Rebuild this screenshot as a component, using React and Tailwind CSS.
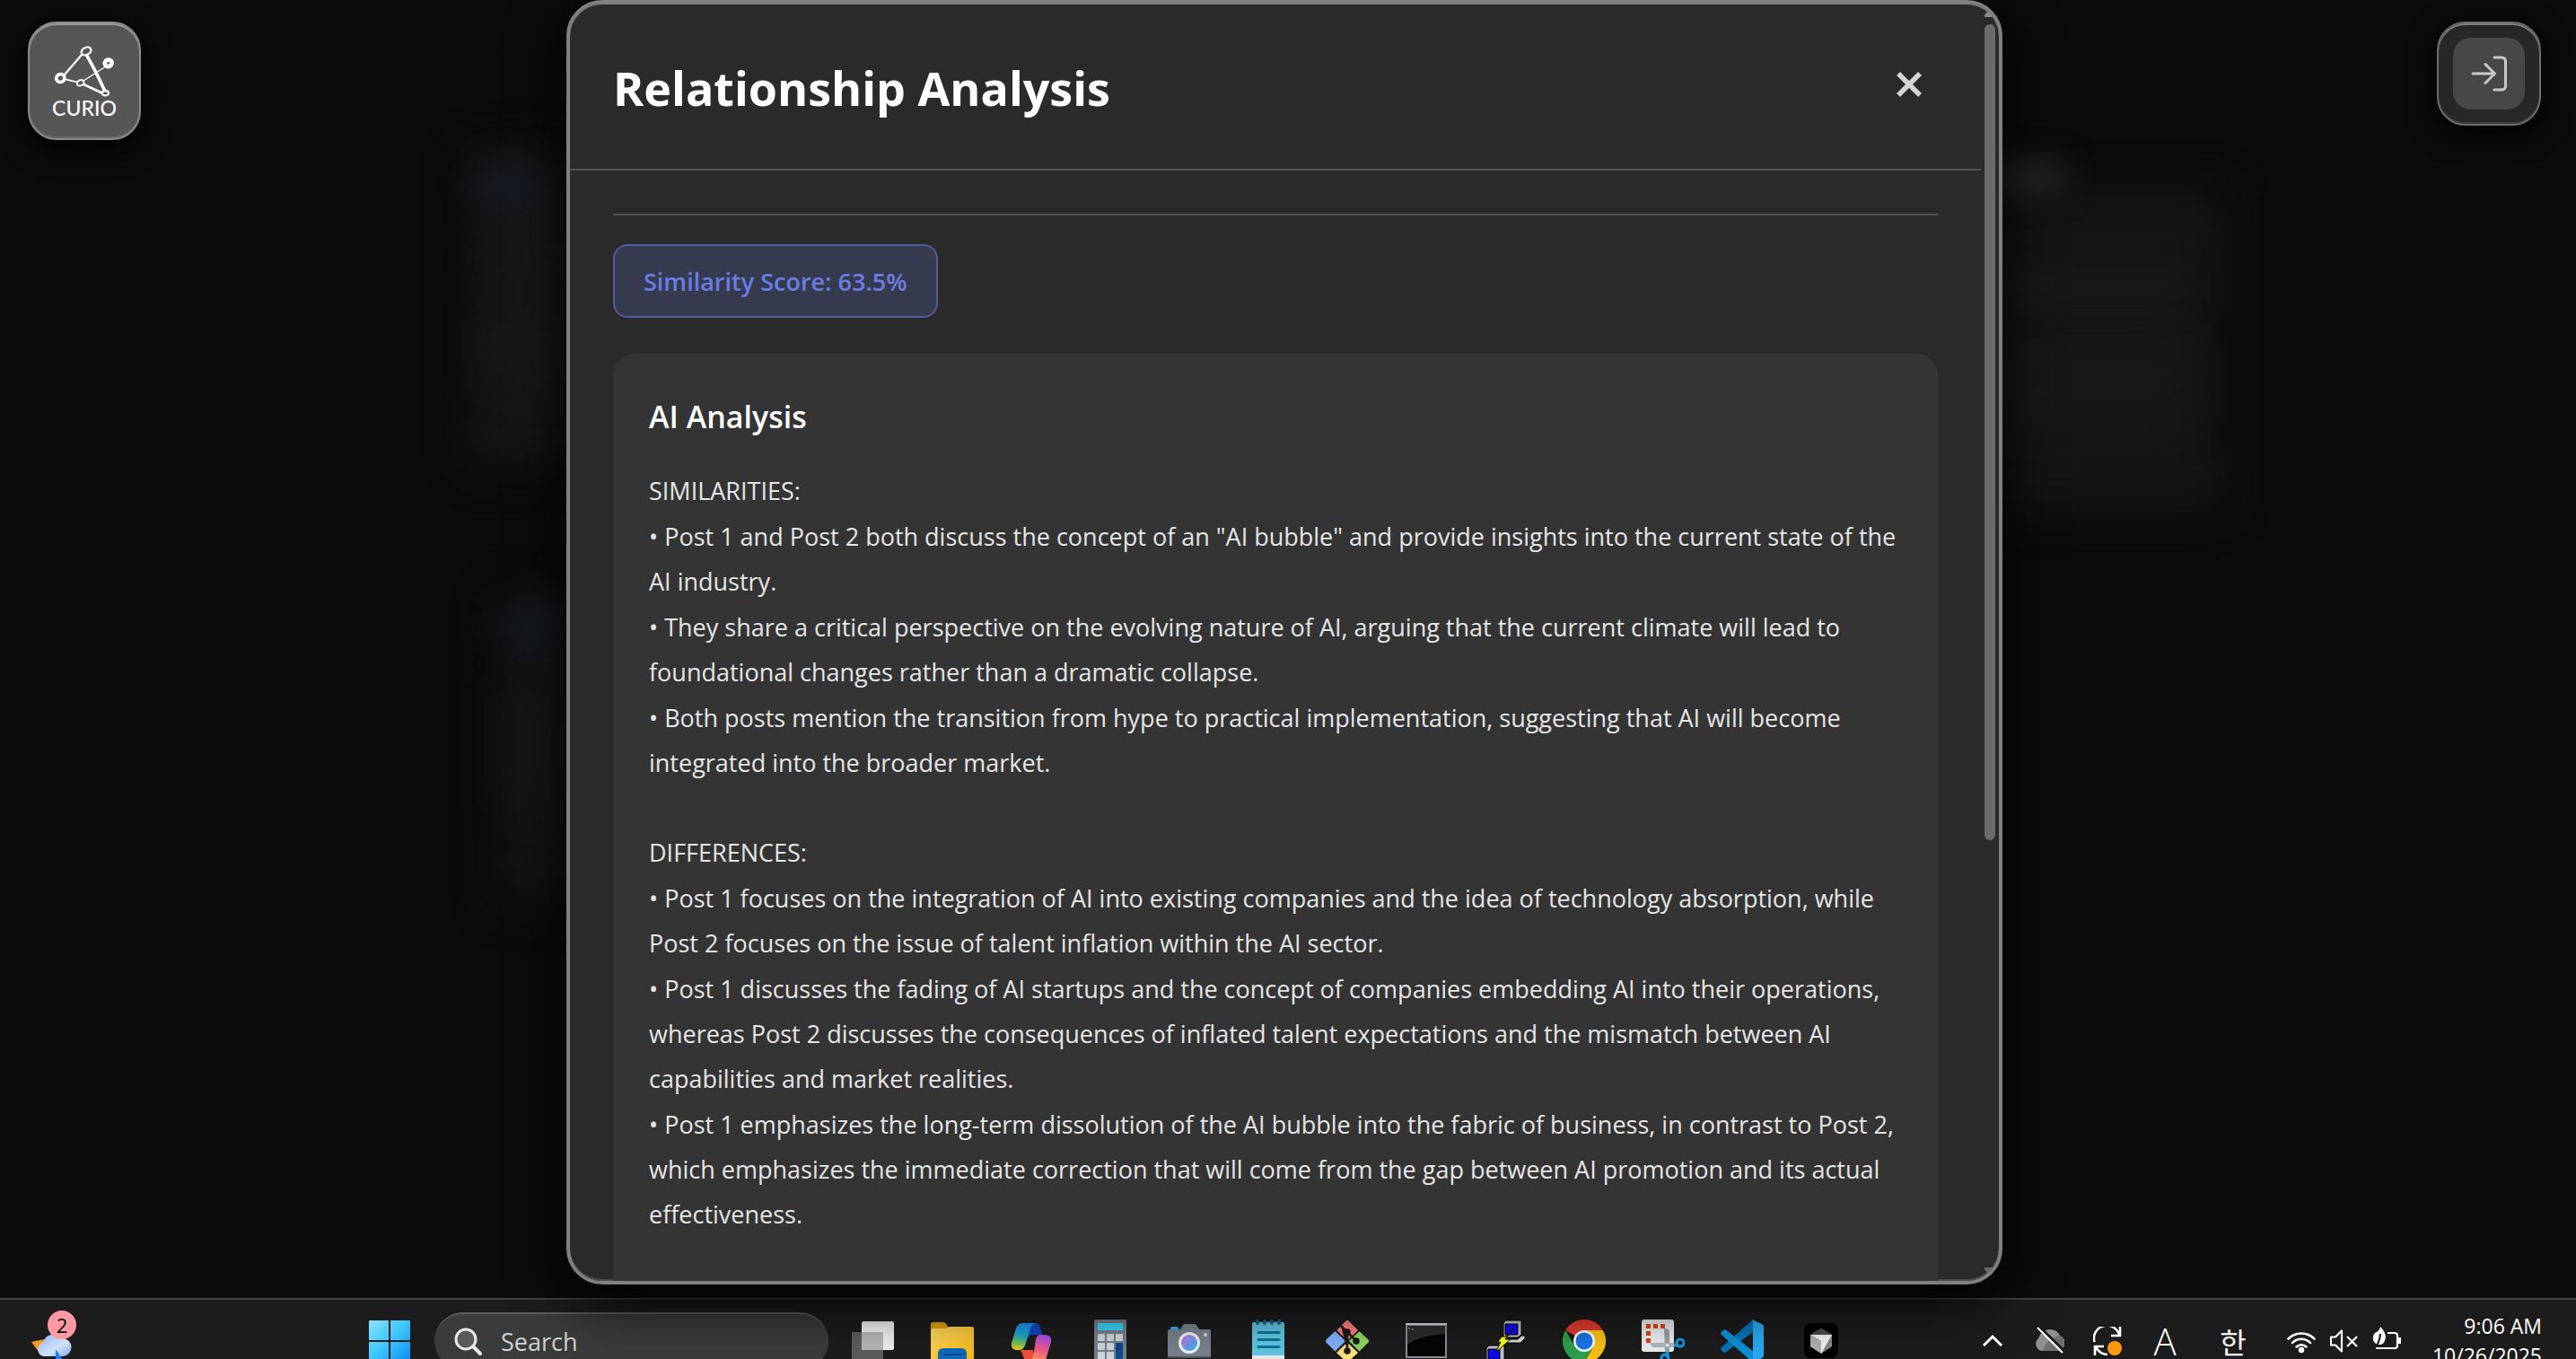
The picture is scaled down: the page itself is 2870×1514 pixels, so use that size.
import React from 'react';

const similarities = [
  'Post 1 and Post 2 both discuss the concept of an "AI bubble" and provide insights into the current state of the AI industry.',
  'They share a critical perspective on the evolving nature of AI, arguing that the current climate will lead to foundational changes rather than a dramatic collapse.',
  'Both posts mention the transition from hype to practical implementation, suggesting that AI will become integrated into the broader market.',
];

const differences = [
  'Post 1 focuses on the integration of AI into existing companies and the idea of technology absorption, while Post 2 focuses on the issue of talent inflation within the AI sector.',
  'Post 1 discusses the fading of AI startups and the concept of companies embedding AI into their operations, whereas Post 2 discusses the consequences of inflated talent expectations and the mismatch between AI capabilities and market realities.',
  'Post 1 emphasizes the long-term dissolution of the AI bubble into the fabric of business, in contrast to Post 2, which emphasizes the immediate correction that will come from the gap between AI promotion and its actual effectiveness.',
];

function CurioMark() {
  return (
    <svg viewBox="96 105 210 180" className="w-[70px] h-[60px]" fill="none" stroke="#fff" strokeLinecap="round">
      <path d="M136 203 192 138" strokeWidth="7" />
      <path d="M210 142 Q238 190 268 256" strokeWidth="11" />
      <path d="M138 220 176 229" strokeWidth="5" />
      <path d="M200 238 258 265" strokeWidth="8" />
      <path d="M198 225 268 180" strokeWidth="4" />
      <ellipse cx="207" cy="126" rx="17" ry="12" strokeWidth="7" transform="rotate(-28 207 126)" />
      <ellipse cx="281" cy="166" rx="12" ry="11" strokeWidth="14" transform="rotate(-28 281 166)" />
      <ellipse cx="121" cy="216" rx="14" ry="13" strokeWidth="11" transform="rotate(-28 121 216)" />
      <ellipse cx="188" cy="232" rx="12" ry="9" strokeWidth="6" transform="rotate(-28 188 232)" />
      <ellipse cx="271" cy="266" rx="11" ry="8" strokeWidth="7" />
    </svg>
  );
}

function LoginIcon() {
  return (
    <svg viewBox="0 0 40 40" className="w-10 h-10" fill="none" stroke="#c8c8c8" strokeWidth="3" strokeLinecap="round" strokeLinejoin="round">
      <path d="M2 20H26M16 9.5 26.5 20 16 30.5" />
      <path d="M26 2H34Q38.500 2 38.500 6.500V33.500Q38.500 38 34 38H26" />
    </svg>
  );
}

function BlurredBoard() {
  return (
    <div className="absolute inset-0 overflow-hidden" aria-hidden="true">
      <div className="absolute left-[524px] top-[170px] w-[420px] h-[345px] bg-[#151515] blur-xl" />
      <div className="absolute left-[545px] top-[190px] w-[50px] h-[36px] bg-[#1b2230] blur-xl" />
      <div className="absolute left-[550px] top-[272px] w-[140px] h-[36px] bg-[#1a1a1a] blur-xl" />
      <div className="absolute left-[550px] top-[340px] w-[140px] h-[80px] bg-[#181818] blur-xl" />
      <div className="absolute left-[558px] top-[665px] w-[420px] h-[340px] bg-[#141414] blur-xl" />
      <div className="absolute left-[575px] top-[680px] w-[50px] h-[36px] bg-[#1a2230] blur-xl" />
      <div className="absolute left-[575px] top-[760px] w-[140px] h-[140px] bg-[#161616] blur-xl" />
      <div className="absolute left-[2050px] top-[212px] w-[424px] h-[355px] bg-[#141414] blur-xl" />
      <div className="absolute left-[2190px] top-[180px] w-[108px] h-[36px] bg-[#272727] blur-lg" />
      <div className="absolute left-[2190px] top-[310px] w-[240px] h-[28px] bg-[#1a1a1a] blur-lg" />
      <div className="absolute left-[2190px] top-[385px] w-[245px] h-[80px] bg-[#181818] blur-xl" />
    </div>
  );
}

function Scrollbar() {
  return (
    <div className="w-5 shrink-0 flex flex-col items-center justify-between py-[5px]" aria-hidden="true">
      <svg viewBox="0 0 12 10" className="w-3 h-[10px]" fill="#8a8a8a"><path d="M0 10V8L6 0 12 8V10Z" /></svg>
      <div className="flex-1 w-3 py-2">
        <div className="h-[66%] rounded-full bg-[#6b6b6b]" />
      </div>
      <svg viewBox="0 0 12 10" className="w-3 h-[10px]" fill="#6b6b6b"><path d="M0 0V2L6 10 12 2V0Z" /></svg>
    </div>
  );
}

function AnalysisList({ title, items }) {
  return (
    <section className="flex flex-col gap-px">
      <h4>{title}</h4>
      {items.map((item) => (
        <p key={item}>{`• ${item}`}</p>
      ))}
    </section>
  );
}

function AnalysisDialog() {
  return (
    <div
      role="dialog"
      aria-labelledby="dialog-title"
      className="relative flex w-[1600px] max-w-full h-full rounded-[40px] border-4 border-[#808080] bg-[#2a2a2a] overflow-hidden shadow-[inset_0_1px_0_#808080,inset_0_-2px_0_#4a4a4a,0_16px_64px_#000]"
    >
      <div className="flex-1 min-w-0 overflow-y-auto [scrollbar-width:none]">
        <header className="flex items-center justify-between h-[186px] px-12 pb-1 border-b-2 border-[#535353]">
          <h2 id="dialog-title" className="pt-2 text-[52px] leading-[72px] font-bold text-white">Relationship Analysis</h2>
          <button type="button" aria-label="Close" className="w-16 h-16 flex items-center justify-center">
            <svg viewBox="0 0 28 28" className="w-7 h-7" stroke="#d4d4d4" strokeWidth="5.500" fill="none"><path d="M2 2 26 26M26 2 2 26" /></svg>
          </button>
        </header>
        <div className="px-12 pt-12">
          <div className="border-t-2 border-[#535353] pt-8">
            <div className="inline-flex items-center h-[82px] px-8 pt-0.5 rounded-2xl border-2 border-[#505c9c] bg-[#363a4e] text-[27px] font-semibold text-[#6b7de3]">
              Similarity Score: 63.5%
            </div>
          </div>
          <div className="mt-10 rounded-3xl bg-[#343434] px-10 pt-[46px] pb-24">
            <h3 className="text-[34px] leading-[48px] font-semibold text-white">AI Analysis</h3>
            <div className="mt-[34px] flex flex-col gap-[50px] text-[27px] leading-[50px] text-[#e6e6e6]">
              <AnalysisList title="SIMILARITIES:" items={similarities} />
              <AnalysisList title="DIFFERENCES:" items={differences} />
            </div>
          </div>
        </div>
      </div>
      <Scrollbar />
    </div>
  );
}

function WeatherIcon() {
  return (
    <svg viewBox="0 0 48 40" className="w-12 h-10">
      <defs>
        <linearGradient id="cloud" x1="0" y1="0" x2="1" y2="1">
          <stop offset="0" stopColor="#8fb4f2" />
          <stop offset="0.6" stopColor="#d3e2fa" />
          <stop offset="1" stopColor="#7fa6ee" />
        </linearGradient>
      </defs>
      <path d="M0 17Q12 14 38 11L28 30 8 28Z" fill="#f59a1c" />
      <path d="M14 33a8 8 0 0 1-1-15.500A12 12 0 0 1 34 13a10 10 0 0 1 1 20Z" fill="url(#cloud)" />
      <path d="M27 25 35 37Q36 40 31 40 27 40 27 36Z" fill="#1f7cf2" />
    </svg>
  );
}

function WindowsIcon() {
  return (
    <svg viewBox="0 0 48 48" className="w-12 h-12">
      <defs>
        <linearGradient id="win" x1="0" y1="0" x2="1" y2="1">
          <stop offset="0" stopColor="#8ce0ff" />
          <stop offset="0.5" stopColor="#3cc6fb" />
          <stop offset="1" stopColor="#0a8bf5" />
        </linearGradient>
      </defs>
      <path fill="url(#win)" d="M2 1H23V23H1V2Q1 1 2 1ZM25 1H46Q47 1 47 2V23H25ZM1 25H23V47H2Q1 47 1 46ZM25 25H47V46Q47 47 46 47H25Z" />
    </svg>
  );
}

function TaskViewIcon() {
  return (
    <svg viewBox="0 0 48 48" className="w-12 h-12">
      <rect x="11" y="2" width="36" height="32" rx="2" fill="#f1f1f1" />
      <rect x="-1" y="14" width="36" height="32" rx="2" fill="#5c5c5c" />
      <path d="M11 14H35V34H11Z" fill="#b7b7b7" />
    </svg>
  );
}

function FolderIcon() {
  return (
    <svg viewBox="0 0 48 48" className="w-12 h-12">
      <defs>
        <linearGradient id="folder" x1="0" y1="0" x2="1" y2="1">
          <stop offset="0" stopColor="#ffdc66" />
          <stop offset="1" stopColor="#f8b50a" />
        </linearGradient>
      </defs>
      <path d="M0 5Q0 3 2 3H14Q16 3 17 5L20 9V16H0Z" fill="#e2a104" />
      <path d="M0 12Q0 10 2 10H17L21 8H46Q48 8 48 10V48H0Z" fill="url(#folder)" />
      <path d="M8 48V38Q8 32 14 32H34Q40 32 40 38V48Z" fill="#0d68bd" />
      <path d="M14 39H34" stroke="#064a8e" strokeWidth="2" />
    </svg>
  );
}

function CopilotIcon() {
  return (
    <svg viewBox="0 0 48 48" className="w-12 h-12">
      <defs>
        <linearGradient id="cpA" x1="0.500" y1="0" x2="0.300" y2="1">
          <stop offset="0" stopColor="#1b8df0" />
          <stop offset="0.450" stopColor="#22a6c8" />
          <stop offset="0.750" stopColor="#6cbf54" />
          <stop offset="1" stopColor="#f3d116" />
        </linearGradient>
        <linearGradient id="cpB" x1="0.700" y1="0" x2="0.400" y2="1">
          <stop offset="0" stopColor="#a04df0" />
          <stop offset="0.500" stopColor="#f0588c" />
          <stop offset="1" stopColor="#ff9d52" />
        </linearGradient>
      </defs>
      <path d="M22 4H29Q33 4 34 9L36 17H27Q22 17 20 22Z" fill="#1344c4" />
      <path d="M14 4H29Q24 5 22 13L17 29Q15 34 10 34H8Q1 34 2 26L7 10Q9 4 14 4Z" fill="url(#cpA)" />
      <path d="M12 34H26L28 45Q22 49 18 46Q15 43 14 38Z" fill="#f0503a" />
      <path d="M34 17H39Q47 17 46 25L41 42Q39 48 33 48H20Q25 46 27 36L29 22Q30 17 34 17Z" fill="url(#cpB)" />
    </svg>
  );
}

function CalculatorIcon() {
  return (
    <svg viewBox="0 0 48 48" className="w-12 h-12">
      <rect x="6" width="36" height="48" rx="2" fill="#76808a" />
      <rect x="10" y="4" width="28" height="8" rx="1" fill="#3bd2fb" />
      <g fill="#cfd6dd">
        <rect x="10" y="16" width="8" height="8" rx="1" />
        <rect x="20" y="16" width="8" height="8" rx="1" />
        <rect x="30" y="16" width="8" height="8" rx="1" />
        <rect x="10" y="26" width="8" height="8" rx="1" />
        <rect x="20" y="26" width="8" height="8" rx="1" />
        <rect x="10" y="36" width="8" height="8" rx="1" />
        <rect x="20" y="36" width="8" height="8" rx="1" />
      </g>
      <rect x="30" y="26" width="8" height="18" rx="1" fill="#0f4a8e" />
    </svg>
  );
}

function CameraIcon() {
  return (
    <svg viewBox="0 0 48 48" className="w-12 h-12">
      <defs>
        <linearGradient id="lens" x1="0" y1="0" x2="1" y2="1">
          <stop offset="0.200" stopColor="#b47be8" />
          <stop offset="0.850" stopColor="#35b0f0" />
        </linearGradient>
      </defs>
      <path d="M3 10Q3 8 5 8H10Q12 8 12 10V14H3Z" fill="#31aef0" />
      <path d="M0 13Q0 11 2 11H14L17 6Q18 5 19 5H29Q31 5 32 6L35 11H46Q48 11 48 13V41Q48 43 46 43H2Q0 43 0 41Z" fill="#78828c" />
      <path d="M0 41H48Q48 43 46 43H2Q0 43 0 41Z" fill="#4c555e" />
      <circle cx="24" cy="26" r="12" fill="#f2f2f2" />
      <circle cx="24" cy="26" r="9" fill="url(#lens)" />
      <circle cx="42" cy="17" r="2" fill="#cfd6dd" />
    </svg>
  );
}

function NotepadIcon() {
  return (
    <svg viewBox="0 0 48 48" className="w-12 h-12">
      <path d="M6 38H42V48H6Z" fill="#e8eaec" />
      <path d="M6 5Q6 3 8 3H40Q42 3 42 5V40H6Z" fill="#62c6e2" />
      <path d="M12 2V4M20 2V4M28 2V4M36 2V4" stroke="#0b6b8c" strokeWidth="4" strokeLinecap="round" />
      <path d="M13 14.500H36M13 22.500H36M13 30.500H36" stroke="#0b7699" strokeWidth="3" strokeLinecap="round" />
    </svg>
  );
}

function GitIcon() {
  return (
    <svg viewBox="0 0 48 48" className="w-12 h-12">
      <path d="M22.500 1.500Q24 0 25.500 1.500L36 12 24 23.500 12.500 12Z" fill="#ff8080" />
      <path d="M37.500 13 47.500 22.500Q48.500 24 47.500 25.500L37.500 35.500 26 24Z" fill="#8fd660" />
      <path d="M10.500 13 22 24 10.500 35.500 .5 25.500Q-.5 24 .5 22.500Z" fill="#82b0ff" />
      <path d="M24 25.500 36 37 25.500 46.500Q24 48 22.500 46.500L12 37Z" fill="#ffe27d" />
      <g stroke="#1c1c1c" strokeWidth="2.500" fill="#1c1c1c">
        <path d="M17 7 24 14V35M24 14 34 24" />
        <circle cx="24" cy="14" r="2.500" />
        <circle cx="24" cy="35" r="2.500" />
        <circle cx="34" cy="24" r="2.500" />
      </g>
    </svg>
  );
}

function TerminalIcon() {
  return (
    <svg viewBox="0 0 48 48" className="w-12 h-12">
      <rect x="1" y="4" width="46" height="39" fill="#8c9099" />
      <path d="M1 4H47V6H1Z" fill="#d9dbe2" />
      <rect x="3" y="7" width="42" height="34" fill="#050505" />
      <path d="M3 7H45V16Q16 18 3 28Z" fill="#2b2b2b" />
      <path d="M4 9 6 11M8 11H10" stroke="#bbb" />
    </svg>
  );
}

function PuttyIcon() {
  return (
    <svg viewBox="0 0 48 48" className="w-12 h-12" stroke="#000">
      <path d="M22 4 25 1H42L42 17 38 20H22Z" fill="#c4c4c4" />
      <path d="M24 5H38V17H24Z" fill="#0a0af0" />
      <path d="M28 22H38L42 18H46V21L41 26H24Z" fill="#d8d8d8" />
      <path d="M3 32 6 29H23V44L19 47H3Z" fill="#c4c4c4" />
      <path d="M5 33H18V44H5Z" fill="#0a0af0" />
      <path d="M0 48 3 46H22L28 44V48Z" fill="#d8d8d8" />
      <path d="M34 9 24 22H30L13 37 19 25 15 26 20 19H25Z" fill="#fdfd10" strokeWidth="1" />
    </svg>
  );
}

function ChromeIcon() {
  return (
    <svg viewBox="0 0 48 48" className="w-12 h-12">
      <path d="M24 24 3.200 12A24 24 0 0 1 44.800 12Z" fill="#e33b2e" />
      <path d="M24 12H44.800A24 24 0 0 1 24 48L34.400 30Z" fill="#fbc116" />
      <path d="M13.600 30 3.200 12A24 24 0 0 0 24 48L34.400 30Z" fill="#2da04a" />
      <circle cx="24" cy="24" r="12" fill="#fff" />
      <circle cx="24" cy="24" r="9.500" fill="#1c74e8" />
    </svg>
  );
}

function SnippingIcon() {
  return (
    <svg viewBox="0 0 48 48" className="w-12 h-12" fill="none">
      <rect width="36" height="36" rx="3" fill="#eceef0" />
      <path d="M5 5H10V10H5ZM13 5H18V10H13ZM21 5H26V10H21ZM5 13H10V18H5ZM5 21H10V26H5Z" fill="#dd4012" />
      <path d="M25 10Q31 10 31 14V36H26Z" fill="#9aa0a7" />
      <path d="M10 26H36V31H14Q10 31 10 26Z" fill="#b3b8be" />
      <path d="M36 28.500H41M28.500 36V42" stroke="#1497dd" strokeWidth="4" />
      <circle cx="43" cy="26" r="4" stroke="#1497dd" strokeWidth="3" />
      <circle cx="26" cy="43" r="4" stroke="#1497dd" strokeWidth="3" />
      <circle cx="28.500" cy="28.500" r="1.500" fill="#fff" />
    </svg>
  );
}

function VsCodeIcon() {
  return (
    <svg viewBox="0 0 48 48" className="w-12 h-12">
      <path d="M1 31 36 0V14L5 37Q3 37 1 34.500Q-.5 33 1 31Z" fill="#0873b8" />
      <path d="M1 17Q-.5 15 1 13.500L3.500 11.500Q5 10.500 6.500 12L36 35V48Z" fill="#0c8fd8" />
      <path d="M35 0 46 5Q48 6 48 8V40Q48 42 46 43L35 48Q36 47 36 45V3Q36 1 35 0Z" fill="#27aaf2" />
    </svg>
  );
}

function CursorIcon() {
  return (
    <svg viewBox="0 0 48 48" className="w-12 h-12">
      <rect x="5" y="4" width="38" height="39" rx="8" fill="#000" />
      <path d="M24 10 36 17V30L24 38 12 30V17Z" fill="#8a8a8a" />
      <path d="M24 10 36 17 24 20 12 17Z" fill="#4b4b4b" />
      <path d="M12 17 36 17 24 38V24Z" fill="#f2f2f2" />
      <path d="M12 17 24 24V38L12 30Z" fill="#b0b0b0" />
    </svg>
  );
}

const apps = [
  { name: 'Task view', Icon: TaskViewIcon },
  { name: 'File Explorer', Icon: FolderIcon },
  { name: 'Copilot', Icon: CopilotIcon },
  { name: 'Calculator', Icon: CalculatorIcon },
  { name: 'Camera', Icon: CameraIcon },
  { name: 'Notepad', Icon: NotepadIcon },
  { name: 'Git', Icon: GitIcon },
  { name: 'Terminal', Icon: TerminalIcon },
  { name: 'PuTTY', Icon: PuttyIcon },
  { name: 'Chrome', Icon: ChromeIcon },
  { name: 'Snipping Tool', Icon: SnippingIcon },
  { name: 'VS Code', Icon: VsCodeIcon },
  { name: 'Cursor', Icon: CursorIcon },
];

function Tray() {
  return (
    <div className="ml-auto flex items-center text-white">
      <div className="flex items-center gap-8">
        <button type="button" aria-label="Show hidden icons">
          <svg viewBox="0 0 32 32" className="w-8 h-8" fill="none" stroke="#fff" strokeWidth="3"><path d="M6 21 16 11 26 21" /></svg>
        </button>
        <button type="button" aria-label="OneDrive">
          <svg viewBox="0 0 32 32" className="w-8 h-8">
            <path d="M8 27A8 8 0 0 1 3 13Q6 4 15 3Q24 3 27 10A9 9 0 0 1 25 27Z" fill="#8f8f8f" />
            <path d="M8 27Q13 12 27 10A9 9 0 0 1 25 27Z" fill="#6e6e6e" />
            <path d="M5 1 32 27" stroke="#1c1c1c" strokeWidth="3" />
            <path d="M2 1 30 29" stroke="#fff" strokeWidth="2" />
          </svg>
        </button>
        <button type="button" aria-label="Windows Update">
          <svg viewBox="0 0 32 32" className="w-8 h-8" fill="none" stroke="#fff" strokeWidth="2.500">
            <path d="M1.500 17A14 14 0 0 1 29 9M30 0V10H20M16 31Q8 31 3 23M2 32V22H12" />
            <circle cx="24" cy="24" r="8" fill="#ff9a0a" stroke="none" />
          </svg>
        </button>
      </div>
      <div className="ml-8 flex items-center gap-11">
        <button type="button" className="w-8 text-[42px] leading-8 font-light">A</button>
        <button type="button" className="w-8 flex justify-center text-[32px] leading-8 font-['Noto_Sans_CJK_KR',sans-serif]">한</button>
      </div>
      <button type="button" aria-label="Network, volume and battery" className="ml-11 flex items-center gap-4">
        <svg viewBox="0 0 32 32" className="w-8 h-8" fill="none" stroke="#fff" strokeWidth="2.500" strokeLinecap="round">
          <path d="M1.500 13.500A20.500 20.500 0 0 1 30.500 13.500M6 18A14 14 0 0 1 26 18M10.500 22.500A8 8 0 0 1 21.500 22.500" />
          <circle cx="16" cy="26" r="2" fill="#fff" />
        </svg>
        <svg viewBox="0 0 32 32" className="w-8 h-8" fill="none" stroke="#fff" strokeWidth="2.200" strokeLinejoin="round">
          <path d="M1 11.500H6L13 4.500V27.500L6 20.500H1ZM19 11 30 22M30 11 19 22" />
        </svg>
        <svg viewBox="0 0 32 32" className="w-8 h-8" fill="none" stroke="#fff" strokeWidth="2.200">
          <path d="M8 0Q15 7 13.500 14Q12 20 7 20Q2 20 0 15Q-1 10 2 7Q7 5 8 0Z" fill="#fff" stroke="none" />
          <path d="M8 8Q7 18 2 24" stroke="#1c1c1c" />
          <path d="M16 7H24Q27 7 27 10V21Q27 24 24 24H3" />
          <path d="M28 12H31V19H28Z" fill="#fff" stroke="none" />
        </svg>
      </button>
      <div className="ml-8 mr-[38px] w-[124px] text-right text-[23px] leading-[33px]">
        <div>9:06 AM</div>
        <div>10/26/2025</div>
      </div>
    </div>
  );
}

function Taskbar() {
  return (
    <footer className="h-[68px] shrink-0 overflow-hidden border-t-2 border-[#424242] bg-[#1c1c1c]">
      <div className="h-[92px] flex items-center">
        <button type="button" aria-label="Widgets" className="relative ml-[35px] w-12 h-12 flex items-end">
          <WeatherIcon />
          <span className="absolute left-[18px] -top-[10px] w-8 h-8 rounded-full bg-[#ff99a3] text-black text-[22px] leading-[32px] text-center">2</span>
        </button>
        <div className="ml-[327px] flex items-center gap-[26px]">
          <button type="button" aria-label="Start"><WindowsIcon /></button>
          <label className="flex items-center w-[439px] h-16 px-[22px] gap-5 rounded-full bg-[#3b3b3b] border-t-2 border-[#5e5e5e]">
            <svg viewBox="0 0 32 32" className="w-8 h-8 shrink-0" fill="#5a5a5a" stroke="#e8eaec" strokeWidth="3" strokeLinecap="round">
              <circle cx="13" cy="13" r="11" />
              <path d="M21 21 29 29" strokeWidth="4" />
            </svg>
            <input type="text" aria-label="Search" placeholder="Search" className="min-w-0 flex-1 bg-transparent text-[27px] placeholder:text-[#d2d2d2] outline-none" />
          </label>
          <div className="flex items-center gap-10">
            {apps.map(({ name, Icon }) => (
              <button type="button" key={name} aria-label={name}><Icon /></button>
            ))}
          </div>
        </div>
        <Tray />
      </div>
    </footer>
  );
}

export default function App() {
  return (
    <div className="h-screen flex flex-col overflow-hidden bg-[#0b0b0b] font-['Open_Sans','Noto_Sans',sans-serif]">
      <main className="relative flex-1 min-h-0">
        <BlurredBoard />
        <div className="relative h-full flex justify-center pb-[15px] pr-2">
          <AnalysisDialog />
        </div>
        <a
          href="#home"
          className="absolute left-[31px] top-6 w-[126px] h-[132px] flex flex-col items-center justify-center rounded-[32px] border-2 border-[#8b8b8b] bg-[#565656] text-white shadow-[inset_0_2px_0_#9a9a9a,inset_0_-2px_0_#686868,0_8px_32px_#000]"
        >
          <CurioMark />
          <span className="text-[23px] leading-5 font-['Lato',sans-serif] font-medium">CURIO</span>
        </a>
        <div className="absolute right-[39px] top-6 w-[116px] h-[116px] flex items-center justify-center rounded-[32px] border-2 border-[#6c6c6c] bg-[#272727] shadow-[inset_0_2px_0_#808080,inset_0_-2px_0_#3c3c3c,0_8px_32px_#000]">
          <button type="button" aria-label="Log in" className="w-20 h-20 flex items-center justify-center rounded-[20px] bg-[#474747]">
            <LoginIcon />
          </button>
        </div>
      </main>
      <Taskbar />
    </div>
  );
}
